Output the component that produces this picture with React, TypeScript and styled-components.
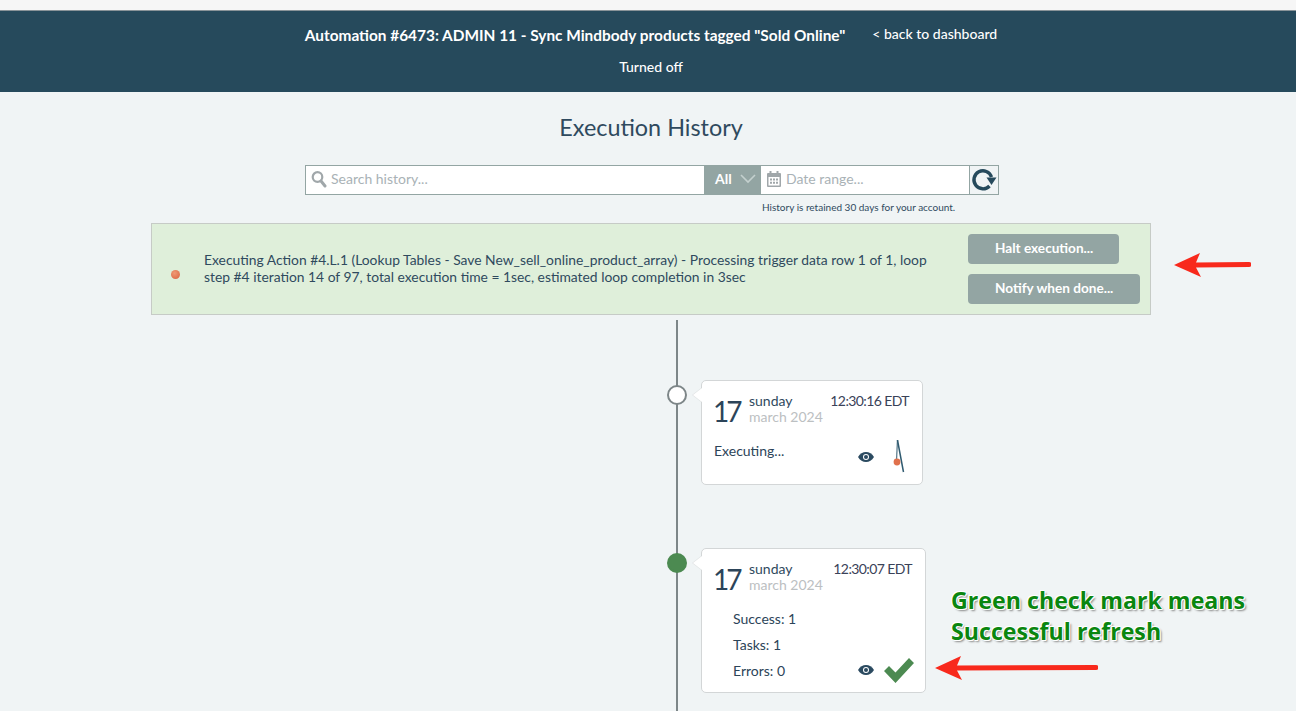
import React from "react";
import styled, { createGlobalStyle } from "styled-components";

const GlobalStyle = createGlobalStyle`
  html, body {
    margin: 0;
    padding: 0;
    height: 711px;
    overflow: hidden;
    background: #f0f4f5;
    font-family: Lato, "Open Sans", sans-serif;
    color: #2c4459;
  }
`;

const Page = styled.div`
  position: relative;
  width: 1302px;
  height: 711px;
  overflow: hidden;
`;

const TopStrip = styled.div`
  height: 10px;
  background: #f6f6f6;
  border-bottom: 1px solid #8a9499;
`;

const Header = styled.header`
  height: 81px;
  background: #264a5c;
  color: #fff;
  display: flex;
  flex-direction: column;
  align-items: center;
`;

const HeaderRow = styled.div`
  display: flex;
  align-items: baseline;
  gap: 27px;
  margin-top: 14px;
  height: 20px;
`;

const AutomationTitle = styled.div`
  font-size: 15.4px;
  font-weight: 700;
  line-height: 20px;
  white-space: nowrap;
`;

const BackLink = styled.a`
  font-size: 14px;
  font-weight: 500;
  line-height: 18px;
  position: relative;
  top: -2px;
  white-space: nowrap;
`;

const Status = styled.div`
  margin-top: 13px;
  font-size: 14px;
  font-weight: 500;
  line-height: 18px;
`;

const Heading = styled.h1`
  margin: 20px 0 0;
  font-size: 23.4px;
  font-weight: 400;
  line-height: 30px;
  text-align: center;
  color: #2f4a5e;
`;

const SearchBar = styled.div`
  box-sizing: border-box;
  display: flex;
  width: 694px;
  height: 30px;
  margin: 23px 0 0 305px;
  border: 1px solid #93a5a3;
  background: #fff;
`;

const Field = styled.div<{ $width: number }>`
  width: ${(p) => p.$width}px;
  display: flex;
  align-items: center;
  gap: 4px;
  padding: 0 0 3px 5px;
  box-sizing: border-box;
  font-size: 14px;
  color: #a9b2b6;
`;

const FilterSelect = styled.div`
  width: 57px;
  background: #93a5a3;
  color: #fff;
  display: flex;
  align-items: center;
  justify-content: space-between;
  padding: 0 5px 3px 11px;
  box-sizing: border-box;
  font-size: 14px;
  font-weight: 700;
`;

const RefreshButton = styled.div`
  flex: 1;
  border-left: 1px solid #93a5a3;
  background: #f0f4f5;
  display: flex;
  align-items: center;
  justify-content: center;
`;

const RetentionNote = styled.div`
  margin: 6px 0 0 762px;
  font-size: 10px;
  line-height: 13px;
  color: #2f4a5e;
`;

const Banner = styled.section`
  box-sizing: border-box;
  display: flex;
  align-items: center;
  width: 1000px;
  height: 92px;
  margin: 9px 0 0 151px;
  background: #dfefda;
  border: 1px solid #c6cbc6;
`;

const PulseDot = styled.span`
  width: 9px;
  height: 9px;
  margin: 10px 0 0 19px;
  flex: none;
  border-radius: 50%;
  background: radial-gradient(circle at 40% 35%, #ef9a75, #d9623f);
`;

const BannerText = styled.p`
  width: 740px;
  margin: 0 0 2px 24px;
  font-size: 13.85px;
  line-height: 17px;
  color: #2f4a5e;
  flex: none;
`;

const BannerActions = styled.div`
  display: flex;
  flex-direction: column;
  align-items: flex-start;
  gap: 10px;
  margin-left: 24px;
`;

const GreyButton = styled.button<{ $width: number }>`
  width: ${(p) => p.$width}px;
  height: 30px;
  border: 0;
  border-radius: 4px;
  background: #93a5a3;
  color: #fff;
  font-family: inherit;
  font-size: 13.6px;
  font-weight: 700;
  text-align: left;
  padding: 0 0 3px 27px;
`;

const Timeline = styled.div`
  position: relative;
  height: 397px;
  margin-top: 5px;
  padding: 60px 0 0 701px;

  &::before {
    content: "";
    position: absolute;
    left: 676px;
    top: 0;
    bottom: 0;
    width: 2px;
    background: #7d8688;
  }
`;

const Entry = styled.article<{ $width: number; $height: number; $gap?: number }>`
  position: relative;
  box-sizing: border-box;
  width: ${(p) => p.$width}px;
  height: ${(p) => p.$height}px;
  margin-bottom: ${(p) => p.$gap ?? 0}px;
  padding: 11px 13px 0 11px;
  background: #fff;
  border: 1px solid #d3d6d7;
  border-radius: 5px;

  &::before {
    content: "";
    position: absolute;
    left: -9px;
    top: 7px;
    width: 0;
    height: 0;
    border-top: 7px solid transparent;
    border-bottom: 7px solid transparent;
    border-right: 9px solid #fff;
    filter: drop-shadow(-1px 0 0 #e0e3e4);
  }
`;

const Node = styled.span<{ $filled?: boolean }>`
  position: absolute;
  left: -35px;
  top: 4px;
  box-sizing: border-box;
  width: 20px;
  height: 20px;
  border-radius: 50%;
  border: 2px solid ${(p) => (p.$filled ? "#4c8a51" : "#7d8688")};
  background: ${(p) => (p.$filled ? "#4c8a51" : "#fff")};
`;

const DateRow = styled.div`
  display: flex;
  align-items: flex-start;
`;

const DayNumber = styled.div`
  width: 36px;
  font-size: 28px;
  font-weight: 400;
  line-height: 38px;
  letter-spacing: -3px;
`;

const DateText = styled.div`
  flex: 1;
  margin-top: 1px;
  font-size: 14px;
  line-height: 16px;
  color: #2f4a5e;
`;

const Month = styled.div`
  color: #bcc0c2;
`;

const Time = styled.div`
  margin-top: 1px;
  font-size: 14px;
  line-height: 16px;
  letter-spacing: -0.6px;
  white-space: nowrap;
  color: #3a4258;
`;

const Message = styled.div`
  margin: 12px 0 0 1px;
  font-size: 14px;
  line-height: 17px;
`;

const Stats = styled.div`
  margin: 8px 0 0 20px;
  font-size: 14px;
  line-height: 26px;
`;

const EntryIcons = styled.div<{ $right: number; $bottom: number; $gap: number }>`
  position: absolute;
  right: ${(p) => p.$right}px;
  bottom: ${(p) => p.$bottom}px;
  display: flex;
  align-items: center;
  gap: ${(p) => p.$gap}px;
`;

const Annotation = styled.div`
  position: absolute;
  left: 951px;
  top: 585px;
  font-family: "Open Sans", sans-serif;
  font-size: 23.2px;
  font-weight: 700;
  line-height: 31px;
  color: #0a860f;
  white-space: nowrap;
  text-shadow: 1px 0 0 #fff, -1px 0 0 #fff, 0 1px 0 #fff, 0 -1px 0 #fff,
    1px 1px 0 #fff, -1px -1px 0 #fff, 2px 2px 2px #8b8b8b;
`;

const ArrowMark = styled.div<{ $left: number; $top: number }>`
  position: absolute;
  left: ${(p) => p.$left}px;
  top: ${(p) => p.$top}px;
  line-height: 0;
`;

const SearchIcon = () => (
  <svg width="16" height="18" viewBox="0 0 16 18">
    <circle cx="6.5" cy="7" r="4.8" fill="none" stroke="#a0a7aa" strokeWidth="2.2" />
    <path d="M10 11l4 5" stroke="#a0a7aa" strokeWidth="3" strokeLinecap="round" />
  </svg>
);

const CalendarIcon = () => (
  <svg width="16" height="18" viewBox="0 0 16 18">
    <rect x="1" y="3" width="14" height="14" rx="1" fill="#a0a7aa" />
    <rect x="3.5" y="1" width="2" height="4" fill="#a0a7aa" />
    <rect x="10.5" y="1" width="2" height="4" fill="#a0a7aa" />
    <rect x="2.5" y="7" width="11" height="8.5" fill="#fff" />
    <path
      d="M4 8.5h2v2H4zM7 8.5h2v2H7zM10 8.5h2v2h-2zM4 11.8h2v2H4zM7 11.8h2v2H7zM10 11.8h2v2h-2z"
      fill="#a0a7aa"
    />
  </svg>
);

const ChevronIcon = () => (
  <svg width="16" height="10" viewBox="0 0 16 10">
    <path d="M1 1l7 7 7-7" fill="none" stroke="#c4d0ce" strokeWidth="1.6" />
  </svg>
);

const RefreshIcon = () => (
  <svg width="26" height="24" viewBox="0 0 26 24">
    <path
      d="M18.500 18A9 9 0 1 1 20.500 9"
      fill="none"
      stroke="#264a5c"
      strokeWidth="3.4"
    />
    <path d="M15.500 9.500h10l-5 7.500z" fill="#264a5c" />
  </svg>
);

const EyeIcon = () => (
  <svg width="16" height="10" viewBox="0 0 16 10">
    <path d="M0 5c2-3.200 4.800-5 8-5s6 1.800 8 5c-2 3.200-4.800 5-8 5S2 8.200 0 5z" fill="#2b4a60" />
    <circle cx="8" cy="5" r="3" fill="#fff" />
    <circle cx="8" cy="5" r="2" fill="#2b4a60" />
  </svg>
);

const SpinnerIcon = () => (
  <svg width="14" height="33" viewBox="0 0 14 33">
    <path d="M4.500 0L3.500 20" stroke="#5f8090" strokeWidth="1.300" />
    <path d="M4.500 0l6 32" stroke="#2f5a70" strokeWidth="1.500" />
    <circle cx="4" cy="22" r="3.400" fill="#e0714c" />
  </svg>
);

const CheckIcon = () => (
  <svg width="32" height="26" viewBox="0 0 32 26">
    <path d="M1 14l5-5 6.500 6.500L26 1l5 5-18.500 20z" fill="#4c8a51" />
  </svg>
);

const RedArrow = ({ width }: { width: number }) => (
  <svg width={width} height="24" viewBox={`0 0 ${width} 24`}>
    <path
      d={`M0 12L26 0l-4 9.500 ${width - 24} -.5a2.500 2.500 0 0 1 0 5L22 14.500 27 24z`}
      fill="#f8291c"
    />
  </svg>
);

export default function App() {
  return (
    <Page>
      <GlobalStyle />
      <TopStrip />
      <Header>
        <HeaderRow>
          <AutomationTitle>
            Automation #6473: ADMIN 11 - Sync Mindbody products tagged "Sold Online"
          </AutomationTitle>
          <BackLink>&lt; back to dashboard</BackLink>
        </HeaderRow>
        <Status>Turned off</Status>
      </Header>

      <Heading>Execution History</Heading>

      <SearchBar>
        <Field $width={398}>
          <SearchIcon />
          Search history...
        </Field>
        <FilterSelect>
          All
          <ChevronIcon />
        </FilterSelect>
        <Field $width={208}>
          <CalendarIcon />
          Date range...
        </Field>
        <RefreshButton>
          <RefreshIcon />
        </RefreshButton>
      </SearchBar>
      <RetentionNote>History is retained 30 days for your account.</RetentionNote>

      <Banner>
        <PulseDot />
        <BannerText>
          Executing Action #4.L.1 (Lookup Tables - Save New_sell_online_product_array) -
          Processing trigger data row 1 of 1, loop step #4 iteration 14 of 97, total
          execution time = 1sec, estimated loop completion in 3sec
        </BannerText>
        <BannerActions>
          <GreyButton $width={151}>Halt execution...</GreyButton>
          <GreyButton $width={172}>Notify when done...</GreyButton>
        </BannerActions>
      </Banner>

      <Timeline>
        <Entry $width={222} $height={105} $gap={63}>
          <Node />
          <DateRow>
            <DayNumber>17</DayNumber>
            <DateText>
              sunday
              <Month>march 2024</Month>
            </DateText>
            <Time>12:30:16 EDT</Time>
          </DateRow>
          <Message>Executing...</Message>
          <EntryIcons $right={15} $bottom={11} $gap={19}>
            <EyeIcon />
            <SpinnerIcon />
          </EntryIcons>
        </Entry>
        <Entry $width={225} $height={145}>
          <Node $filled />
          <DateRow>
            <DayNumber>17</DayNumber>
            <DateText>
              sunday
              <Month>march 2024</Month>
            </DateText>
            <Time>12:30:07 EDT</Time>
          </DateRow>
          <Stats>
            <div>Success: 1</div>
            <div>Tasks: 1</div>
            <div>Errors: 0</div>
          </Stats>
          <EntryIcons $right={10} $bottom={9} $gap={9}>
            <EyeIcon />
            <CheckIcon />
          </EntryIcons>
        </Entry>
      </Timeline>

      <Annotation>
        Green check mark means
        <br />
        Successful refresh
      </Annotation>
      <ArrowMark $left={1174} $top={253}>
        <RedArrow width={77} />
      </ArrowMark>
      <ArrowMark $left={935} $top={656}>
        <RedArrow width={163} />
      </ArrowMark>
    </Page>
  );
}
